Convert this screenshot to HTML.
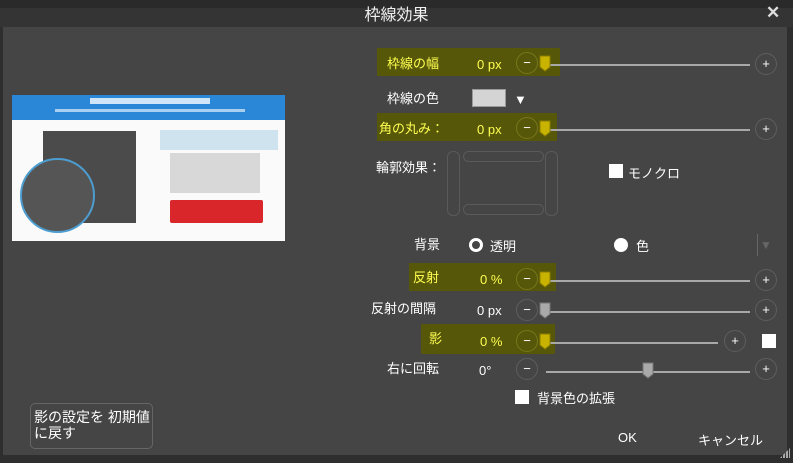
<!DOCTYPE html>
<html><head><meta charset="utf-8"><style>
*{margin:0;padding:0;box-sizing:border-box}
body{width:793px;height:463px;background:#2e2e2e;position:relative;overflow:hidden;font-family:"Liberation Sans","Noto Sans CJK JP",sans-serif;color:#fff;font-size:13px}
.a{position:absolute;white-space:nowrap}
.hl{position:absolute;background:#57570a}
.y{color:#ffff50}
.c{position:absolute;width:22px;height:22px;border-radius:50%;border:1.5px solid #5e5e5e;color:#fff;font-size:13px;line-height:19px;text-align:center}
.hlc{border-color:#77771a}
.tr{position:absolute;height:2px;background:#a8a8a8}
.h{position:absolute;width:12px;height:17px}
.p{position:absolute;border:1.5px solid #5a5a5a;border-radius:6px}
.cb{position:absolute;width:14px;height:14px;background:#fff}
</style></head><body>
<div class="a" style="left:0;top:0;width:793px;height:8px;background:#2a2a2a"></div>
<div class="a" style="left:0;top:8px;width:793px;height:19px;background:#343434"></div>
<div class="a" style="left:0;top:1px;width:793px;text-align:center;font-size:16px;color:#f0f0f0">枠線効果</div>
<div class="a" style="left:766px;top:3px;font-size:17px;color:#ddd;font-weight:bold">✕</div>
<div class="a" style="left:3px;top:27px;width:784px;height:428px;background:#454545"></div>

<!-- thumbnail -->
<div class="a" style="left:12px;top:95px;width:273px;height:146px;background:#fafafa"></div>
<div class="a" style="left:12px;top:95px;width:273px;height:25px;background:#2a87d8"></div>
<div class="a" style="left:90px;top:98px;width:120px;height:6px;background:#d0e6f8"></div>
<div class="a" style="left:55px;top:109px;width:190px;height:3px;background:#a8cff0"></div>
<div class="a" style="left:43px;top:131px;width:93px;height:92px;background:#4b4b4b"></div>
<div class="a" style="left:20px;top:158px;width:75px;height:75px;border-radius:50%;border:2px solid #4d9dd0;background:#555"></div>
<div class="a" style="left:160px;top:130px;width:118px;height:20px;background:#cfe3ef"></div>
<div class="a" style="left:170px;top:153px;width:90px;height:40px;background:#d8d8d8"></div>
<div class="a" style="left:170px;top:200px;width:93px;height:23px;background:#d9262a;border-radius:2px"></div>

<!-- row 1 -->
<div class="hl" style="left:377px;top:48px;width:183px;height:28px"></div>
<div class="a y" style="left:387px;top:53px">枠線の幅</div>
<div class="a y" style="left:477px;top:57px">0 px</div>
<div class="c hlc" style="left:516px;top:52px">−</div>
<div class="tr" style="left:545px;top:64px;width:205px"></div>
<svg class="h" style="left:539px;top:55px" viewBox="0 0 12 17"><path d="M1 1H11V12L6 16L1 12Z" fill="#c8b400" stroke="#8a7c00"/></svg>
<div class="c" style="left:755px;top:53px">+</div>

<div class="a" style="left:387px;top:88px">枠線の色</div>
<div class="a" style="left:472px;top:89px;width:34px;height:18px;background:#d4d4d4;border:1px solid #999"></div>
<div class="a" style="left:514px;top:92px;font-size:13px">▼</div>

<div class="hl" style="left:377px;top:113px;width:180px;height:28px"></div>
<div class="a y" style="left:379px;top:118px">角の丸み：</div>
<div class="a y" style="left:477px;top:122px">0 px</div>
<div class="c hlc" style="left:516px;top:117px">−</div>
<div class="tr" style="left:545px;top:129px;width:205px"></div>
<svg class="h" style="left:539px;top:120px" viewBox="0 0 12 17"><path d="M1 1H11V12L6 16L1 12Z" fill="#c8b400" stroke="#8a7c00"/></svg>
<div class="c" style="left:755px;top:118px">+</div>

<div class="a" style="left:376px;top:157px">輪郭効果：</div>
<div class="p" style="left:447px;top:151px;width:13px;height:65px"></div>
<div class="p" style="left:463px;top:151px;width:81px;height:11px"></div>
<div class="p" style="left:463px;top:204px;width:81px;height:11px"></div>
<div class="p" style="left:545px;top:151px;width:13px;height:65px"></div>
<div class="cb" style="left:609px;top:164px"></div>
<div class="a" style="left:628px;top:163px">モノクロ</div>

<div class="a" style="left:414px;top:234px">背景</div>
<div class="a" style="left:469px;top:238px;width:14px;height:14px;border-radius:50%;border:3px solid #fff"></div>
<div class="a" style="left:490px;top:236px">透明</div>
<div class="a" style="left:614px;top:238px;width:14px;height:14px;border-radius:50%;background:#fff"></div>
<div class="a" style="left:636px;top:236px">色</div>
<div class="a" style="left:757px;top:234px;width:1px;height:22px;background:#666"></div>
<div class="a" style="left:760px;top:238px;color:#666;font-size:12px">▼</div>

<div class="hl" style="left:409px;top:263px;width:147px;height:28px"></div>
<div class="a y" style="left:413px;top:267px">反射</div>
<div class="a y" style="left:480px;top:272px">0 %</div>
<div class="c hlc" style="left:516px;top:268px">−</div>
<div class="tr" style="left:545px;top:280px;width:205px"></div>
<svg class="h" style="left:539px;top:271px" viewBox="0 0 12 17"><path d="M1 1H11V12L6 16L1 12Z" fill="#c8b400" stroke="#8a7c00"/></svg>
<div class="c" style="left:755px;top:269px">+</div>

<div class="a" style="left:371px;top:298px">反射の間隔</div>
<div class="a" style="left:477px;top:303px">0 px</div>
<div class="c" style="left:516px;top:299px">−</div>
<div class="tr" style="left:545px;top:311px;width:205px"></div>
<svg class="h" style="left:539px;top:302px" viewBox="0 0 12 17"><path d="M1 1H11V12L6 16L1 12Z" fill="#aaa" stroke="#777"/></svg>
<div class="c" style="left:755px;top:299px">+</div>

<div class="hl" style="left:421px;top:324px;width:134px;height:30px"></div>
<div class="a y" style="left:429px;top:328px">影</div>
<div class="a y" style="left:480px;top:334px">0 %</div>
<div class="c hlc" style="left:516px;top:330px">−</div>
<div class="tr" style="left:545px;top:342px;width:173px"></div>
<svg class="h" style="left:539px;top:333px" viewBox="0 0 12 17"><path d="M1 1H11V12L6 16L1 12Z" fill="#c8b400" stroke="#8a7c00"/></svg>
<div class="c" style="left:724px;top:330px">+</div>
<div class="cb" style="left:762px;top:334px"></div>

<div class="a" style="left:387px;top:358px">右に回転</div>
<div class="a" style="left:479px;top:363px">0°</div>
<div class="c" style="left:516px;top:358px">−</div>
<div class="tr" style="left:546px;top:371px;width:204px"></div>
<svg class="h" style="left:642px;top:362px" viewBox="0 0 12 17"><path d="M1 1H11V12L6 16L1 12Z" fill="#aaa" stroke="#777"/></svg>
<div class="c" style="left:755px;top:358px">+</div>

<div class="cb" style="left:515px;top:390px"></div>
<div class="a" style="left:537px;top:388px">背景色の拡張</div>

<div class="a" style="left:30px;top:403px;width:123px;height:46px;border:1.5px solid #666;border-radius:5px"></div>
<div class="a" style="left:34px;top:409px;line-height:16px;font-size:14px">影の設定を 初期値<br>に戻す</div>

<div class="a" style="left:618px;top:430px">OK</div>
<div class="a" style="left:698px;top:430px">キャンセル</div>
<div class="a" style="left:780px;top:448px;width:10px;height:10px;background:repeating-linear-gradient(90deg,#aaa 0 2px,transparent 2px 3px);clip-path:polygon(100% 0,100% 100%,0 100%)"></div>
</body></html>
